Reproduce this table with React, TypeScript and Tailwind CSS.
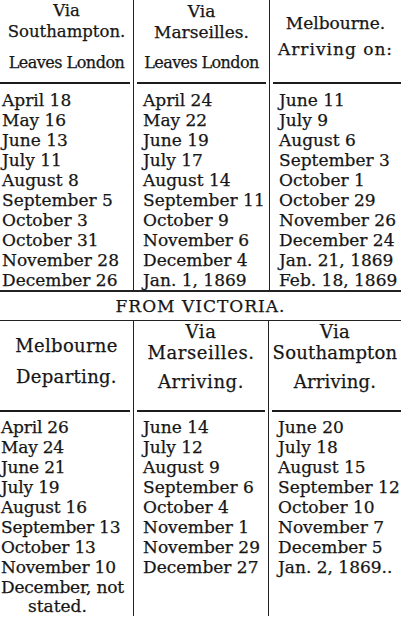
import React from "react";

const toMelbourne = {
  southampton: [
    "April 18",
    "May 16",
    "June 13",
    "July 11",
    "August 8",
    "September 5",
    "October 3",
    "October 31",
    "November 28",
    "December 26",
  ],
  marseilles: [
    "April 24",
    "May 22",
    "June 19",
    "July 17",
    "August 14",
    "September 11",
    "October 9",
    "November 6",
    "December 4",
    "Jan. 1, 1869",
  ],
  arriving: [
    "June 11",
    "July 9",
    "August 6",
    "September 3",
    "October 1",
    "October 29",
    "November 26",
    "December 24",
    "Jan. 21, 1869",
    "Feb. 18, 1869",
  ],
};

const fromVictoria = {
  departing: [
    "April 26",
    "May 24",
    "June 21",
    "July 19",
    "August 16",
    "September 13",
    "October 13",
    "November 10",
    "December, not",
  ],
  marseilles: [
    "June 14",
    "July 12",
    "August 9",
    "September 6",
    "October 4",
    "November 1",
    "November 29",
    "December 27",
  ],
  southampton: [
    "June 20",
    "July 18",
    "August 15",
    "September 12",
    "October 10",
    "November 7",
    "December 5",
    "Jan. 2, 1869..",
  ],
};

function Dates({ items, className = "" }: { items: string[]; className?: string }) {
  return (
    <ul className={`whitespace-nowrap ${className}`}>
      {items.map((d) => (
        <li key={d}>{d}</li>
      ))}
    </ul>
  );
}

// short rule under each header cell, broken where the column lines cross
function Rule({ className = "" }: { className?: string }) {
  return <div className={`h-[2px] bg-[#1c1c1c] ${className}`} />;
}

export default function App() {
  return (
    <div className="h-[618px] w-[401px] overflow-hidden bg-white font-['DejaVu_Serif',serif] text-[17px] leading-[20px] text-[#161616] [-webkit-text-stroke:0.25px_#161616]">
      {/* To Melbourne */}
      <div className="grid grid-cols-[133px_136px_132px]">
        <div>
          <div className="h-[82px] text-center text-[16.5px] leading-[21px]">
            <div>Via</div>
            <div>Southampton.</div>
            <div className="mt-[10px] text-[16px] tracking-[-0.5px]">Leaves London</div>
          </div>
          <Rule className="mr-[3px]" />
          <Dates items={toMelbourne.southampton} className="pl-[2px] pt-[6px]" />
        </div>
        <div className="border-l border-[#222]">
          <div className="h-[82px] pt-[1px] text-center text-[17px] leading-[21px]">
            <div>Via</div>
            <div>Marseilles.</div>
            <div className="mt-[9px] text-[16px] tracking-[-0.6px]">Leaves London</div>
          </div>
          <Rule className="mx-[3px]" />
          <Dates items={toMelbourne.marseilles} className="pl-[9px] pt-[6px]" />
        </div>
        <div className="border-l border-[#222]">
          <div className="h-[82px] pt-[13px] text-center text-[17px] leading-[21px]">
            <div>Melbourne.</div>
            <div className="mt-[5px] tracking-[1px]">Arriving on:</div>
          </div>
          <Rule className="ml-[3px]" />
          <Dates items={toMelbourne.arriving} className="pl-[9px] pt-[6px]" />
        </div>
      </div>

      {/* From Victoria */}
      <div className="flex h-[31px] items-center justify-center border-y border-t-2 border-[#222] text-[17px] tracking-[1px]">
        FROM VICTORIA.
      </div>

      <div className="grid grid-cols-[133px_135px_133px]">
        <div>
          <div className="h-[89px] pt-[14px] text-center text-[18px] leading-[22px] tracking-[0.3px]">
            <div>Melbourne</div>
            <div className="mt-[9px]">Departing.</div>
          </div>
          <Rule className="mr-[3px]" />
          <Dates
            items={fromVictoria.departing}
            className="pl-[1px] pt-[5px] leading-[20px] tracking-[-0.2px]"
          />
          <div className="pl-[28px] leading-[19px]">stated.</div>
        </div>
        <div className="border-l border-[#222]">
          <div className="h-[89px] text-center text-[18px] leading-[21px] tracking-[0.6px]">
            <div>Via</div>
            <div>Marseilles.</div>
            <div className="mt-[8px]">Arriving.</div>
          </div>
          <Rule className="mx-[3px]" />
          <Dates items={fromVictoria.marseilles} className="pl-[9px] pt-[5px] leading-[20px]" />
        </div>
        <div className="border-l border-[#222]">
          <div className="h-[89px] text-center text-[18px] leading-[21px] tracking-[0.2px]">
            <div>Via</div>
            <div>Southampton</div>
            <div className="mt-[8px]">Arriving.</div>
          </div>
          <Rule className="ml-[3px]" />
          <Dates items={fromVictoria.southampton} className="pl-[9px] pt-[5px] leading-[20px]" />
        </div>
      </div>
    </div>
  );
}
